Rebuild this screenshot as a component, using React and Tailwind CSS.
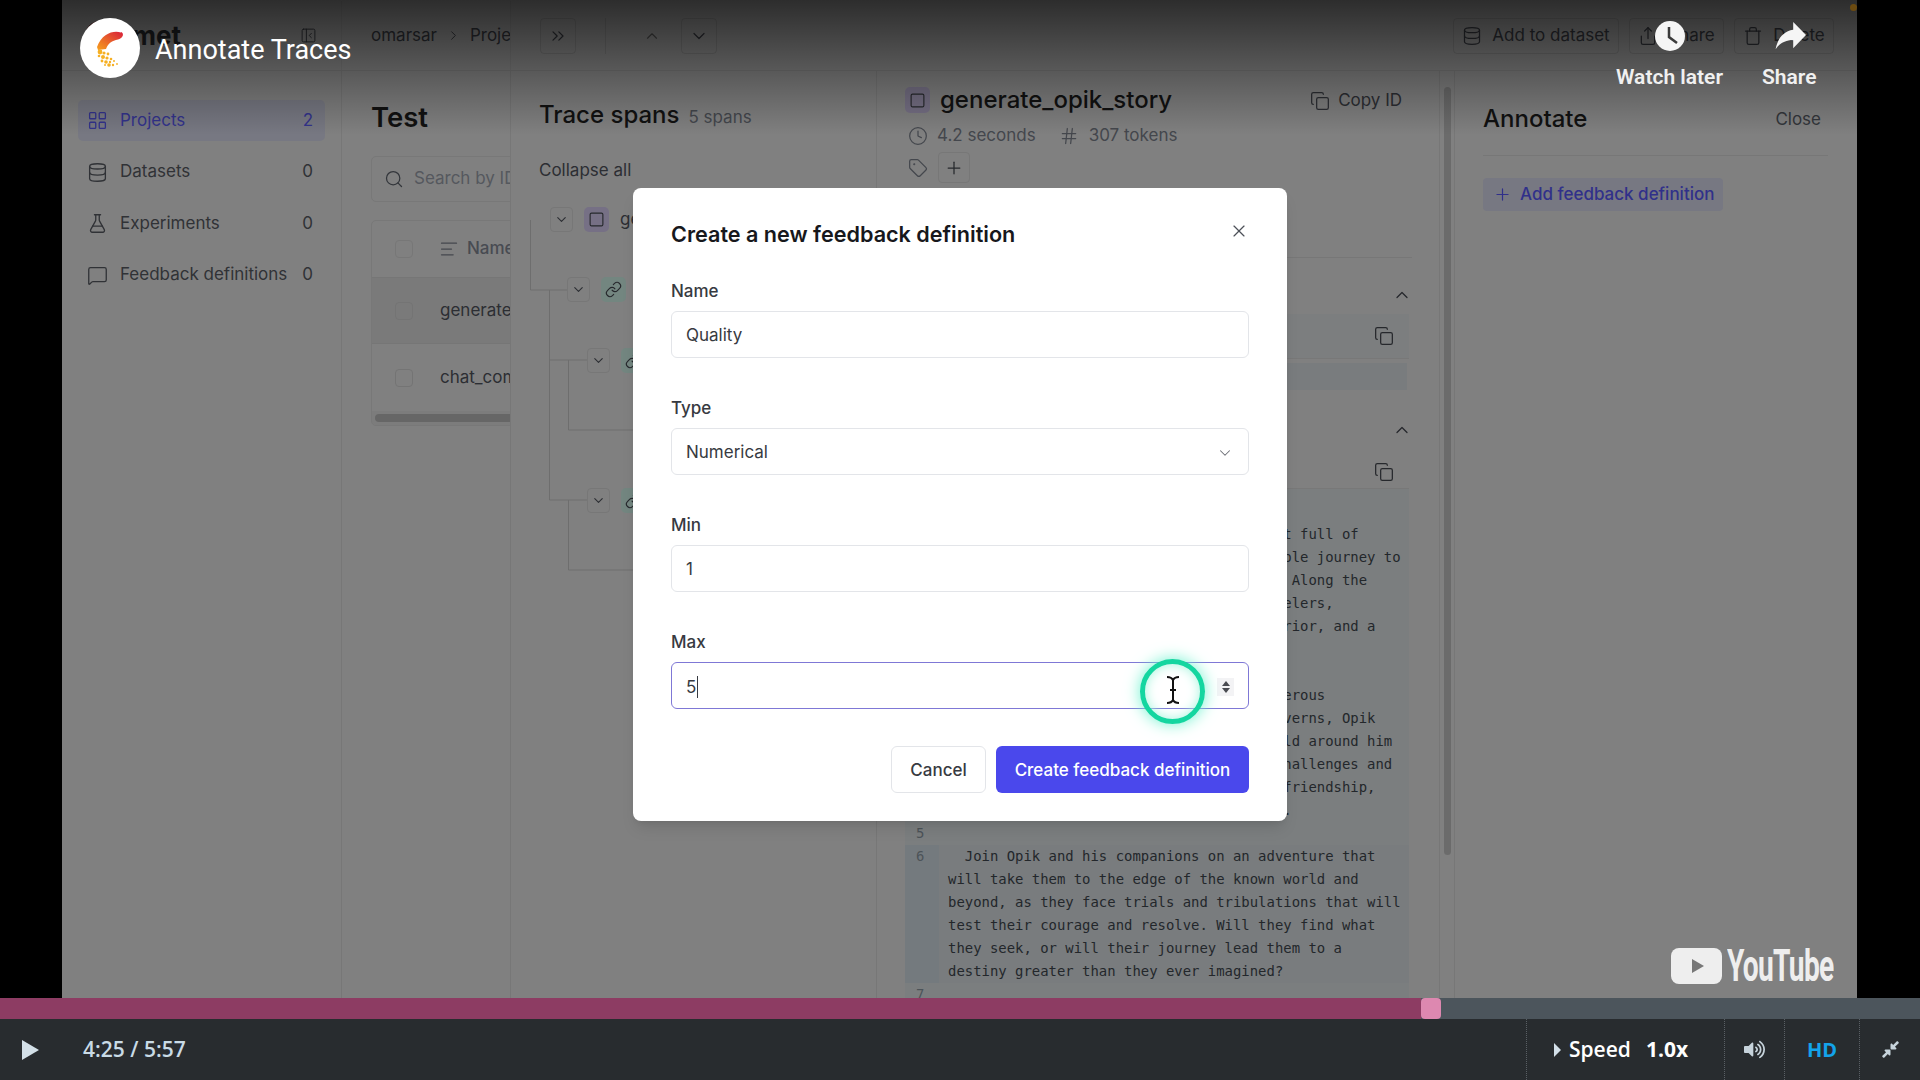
import {
  AlignLeft,
  ChevronDown,
  ChevronRight,
  ChevronUp,
  ChevronsRight,
  Clock,
  Copy,
  Database,
  FlaskConical,
  Hash,
  LayoutGrid,
  Link,
  MessageSquare,
  PanelLeftClose,
  Plus,
  Search,
  Share,
  Square,
  Tag,
  Trash,
  X,
} from "lucide-react";
import { FaCompressAlt, FaVolumeUp } from "react-icons/fa";

const navItems = [
  { name: "Projects", count: 2, Icon: LayoutGrid, active: true },
  { name: "Datasets", count: 0, Icon: Database },
  { name: "Experiments", count: 0, Icon: FlaskConical },
  { name: "Feedback definitions", count: 0, Icon: MessageSquare },
];

const codeLines = [
  { n: 1, rows: ["  The Tale of Opik"] },
  {
    n: 2,
    rows: [
      "  In a land far away, there lies a forest full of",
      "wonder. Young Opik sets out on a remarkable journey to",
      "uncover the secret of his ancient world. Along the",
      "way, he meets a band of kind fellow travelers,",
      "including a cunning wizard, a fierce warrior, and a",
      "mischievous sprite.",
    ],
  },
  { n: 3, rows: [" "] },
  {
    n: 4,
    rows: [
      "  Through enchanted mountains and treacherous",
      "crossings, and deep, dark underground caverns, Opik",
      "discovers the magic and charm of the world around him",
      "and gains valuable lessons as he faces challenges and",
      "overcomes hurdles with bravery, wit and friendship,",
      "always staying true to his ancient quest.",
    ],
  },
  { n: 5, rows: [" "] },
  {
    n: 6,
    active: true,
    rows: [
      "  Join Opik and his companions on an adventure that",
      "will take them to the edge of the known world and",
      "beyond, as they face trials and tribulations that will",
      "test their courage and resolve. Will they find what",
      "they seek, or will their journey lead them to a",
      "destiny greater than they ever imagined?",
    ],
  },
  { n: 7, rows: [" "] },
];

const treeRows = [
  { top: "mt-[25px]", left: "ml-[11px]", tile: "bg-[#767085]", Icon: Square, label: "generate_opik_story" },
  { top: "mt-[45px]", left: "ml-[28px]", tile: "bg-[#738680]", Icon: Link },
  { top: "mt-[46px]", left: "ml-[48px]", tile: "bg-[#738680]", Icon: Link },
  { top: "mt-[115px]", left: "ml-[48px]", tile: "bg-[#738680]", Icon: Link },
];

const CometMark = () => (
  <svg width="60" height="60" viewBox="0 0 60 60">
    <defs>
      <linearGradient id="comet" x1="1" y1="0" x2="0" y2="1">
        <stop offset="0" stopColor="#d81e3a" />
        <stop offset="1" stopColor="#f7a01c" />
      </linearGradient>
    </defs>
    <path d="M41 14.500C34 12 22 15 17 29l1 3 8-1c2-6 6-8 12-9.500 6-2 6-6.500 3-7.500z" fill="url(#comet)" />
    {[
      [20, 34, 2.4], [24, 35, 1.6], [28, 36, 1.4], [19, 38, 1.3], [23, 39, 2], [27, 40, 1.6], [31, 41, 1.3],
      [22, 43, 1.4], [26, 44, 1.8], [30, 44, 1.2], [34, 43, 1], [29, 47, 1.8], [33, 47, 1.2], [37, 46, 0.9],
      [25, 47, 1],
    ].map(([cx, cy, r]) => (
      <circle key={`${cx}-${cy}`} cx={cx} cy={cy} r={r} fill="#f6b024" />
    ))}
  </svg>
);

const Sidebar = () => (
  <aside className="w-[280px] shrink-0 border-r border-[#777777] px-4 pt-[29px]">
    <nav className="flex flex-col gap-[10.5px]">
      {navItems.map(({ name, count, Icon, active }) => (
        <div
          key={name}
          className={`flex h-[41px] items-center rounded-[5px] pl-[9px] pr-[12px] text-[17px] ${
            active ? "bg-[#777882] text-[#33338c]" : "text-[#303236]"
          }`}
        >
          <Icon size={21} strokeWidth={1.5} className="mr-[12px] shrink-0" />
          <span className="flex-1">{name}</span>
          <span>{count}</span>
        </div>
      ))}
    </nav>
  </aside>
);

const TestPanel = () => (
  <section className="w-[169px] shrink-0 overflow-hidden border-r border-[#777777] pl-[29px] pt-[30px]">
    <h1 className="h-[32px] text-[27.5px] leading-[32px] font-semibold text-[#111111]">Test</h1>
    <div className="mt-[23px] flex h-[46px] w-[300px] items-center gap-[10px] rounded-[5px] border border-[#787878] pl-[12px] text-[17px] whitespace-nowrap text-[#55585e]">
      <Search size={20} strokeWidth={1.5} className="text-[#33363b]" />
      Search by ID
    </div>
    <div className="mt-[18px] w-[300px] overflow-hidden rounded-[5px] border border-[#787878] text-[17px] text-[#2c2e33]">
      <div className="flex h-[57px] items-center border-b border-[#767676] pl-[23px]">
        <span className="mr-[26px] h-[18px] w-[18px] rounded-[4px] border border-[#777777]" />
        <AlignLeft size={20} strokeWidth={1.5} className="mr-[8px] text-[#44474d]" />
        <span className="font-medium text-[#484b52]">Name</span>
      </div>
      <div className="flex h-[66px] items-center border-b border-[#767676] bg-[#7a7a7a] pl-[23px]">
        <span className="mr-[27px] h-[18px] w-[18px] rounded-[4px] border border-[#747474]" />
        generate_opik_story
      </div>
      <div className="flex h-[67px] items-center pl-[23px]">
        <span className="mr-[27px] h-[18px] w-[18px] rounded-[4px] border border-[#747474]" />
        chat_completion
      </div>
      <div className="flex h-[14px] items-center bg-[#7c7c7c] pl-[3px]">
        <div className="h-[8px] w-[260px] rounded-full bg-[#666666]" />
      </div>
    </div>
  </section>
);

const TracePanel = () => (
  <section className="relative w-[366px] shrink-0 border-r border-[#777777] pl-[28px] pt-[28px]">
    <div className="flex h-[32px] items-baseline gap-[9px] whitespace-nowrap">
      <h2 className="text-[24px] leading-[32px] font-medium text-[#111111]">Trace spans</h2>
      <span className="text-[17px] text-[#44474d]">5 spans</span>
    </div>
    <button className="mt-[27px] block h-[24px] text-[17px] leading-[24px] text-[#2c2e33]">Collapse all</button>
    <svg className="absolute left-0 top-0" width="366" height="520" fill="none" stroke="#6e6e6e">
      <path d="M19.500 149V219H56M38.500 219V289H76M57.500 289V359H122M38.500 289V429H76M57.500 429V499H122" />
    </svg>
    {treeRows.map(({ top, left, tile, Icon, label }, i) => (
      <div key={i} className={`relative flex h-[25px] items-center gap-[11px] ${top} ${left}`}>
        <span className="flex h-[25px] w-[23px] items-center justify-center rounded-[4px] border border-[#777777] bg-[#808080]">
          <ChevronDown size={15} strokeWidth={1.8} className="text-[#2c2e33]" />
        </span>
        <span className={`flex h-[25px] w-[25px] items-center justify-center rounded-[5px] ${tile}`}>
          <Icon size={17} strokeWidth={1.6} className="text-[#26282c]" />
        </span>
        {label && <span className="text-[17px] whitespace-nowrap text-[#2c2e33]">{label}</span>}
      </div>
    ))}
  </section>
);

const CodeBlock = () => (
  <div className="mr-[3px] flex-1 overflow-hidden bg-[#7b7e7f] pt-[11px] font-['DejaVu_Sans_Mono',monospace] text-[13.93px] leading-[23px] text-[#23272b]">
    {codeLines.map(({ n, rows, active }) => (
      <div key={n} className={`flex ${active ? "bg-[#797c7e]" : ""}`}>
        <div className={`w-[34px] shrink-0 pl-[11px] text-[#4c5358] ${active ? "bg-[#747a7e]" : ""}`}>{n}</div>
        <div className="pl-[9px] whitespace-pre">
          {rows.map((row, i) => (
            <div key={i}>{row}</div>
          ))}
        </div>
      </div>
    ))}
  </div>
);

const DetailPanel = () => (
  <section className="flex w-[578px] shrink-0 border-r border-[#777777]">
    <div className="flex w-[563px] shrink-0 flex-col border-r border-[#777777] pl-[28px] pr-[27px] pt-[16px]">
      <div className="flex h-[26px] items-center">
        <span className="mr-[10px] flex h-[26px] w-[25px] items-center justify-center rounded-[5px] bg-[#767085]">
          <Square size={17} strokeWidth={1.6} className="text-[#26282c]" />
        </span>
        <h2 className="flex-1 text-[24px] font-medium text-[#111111]">generate_opik_story</h2>
        <Copy size={20} strokeWidth={1.5} className="mr-[8px] mt-[2px] text-[#2c2e33]" />
        <span className="mr-[10px] mt-[2px] text-[17px] text-[#2c2e33]">Copy ID</span>
      </div>
      <div className="mt-[11px] flex h-[24px] items-center pl-[3px] text-[17px] text-[#44474d]">
        <Clock size={20} strokeWidth={1.5} className="mr-[9px]" />
        <span>4.2 seconds</span>
        <Hash size={20} strokeWidth={1.5} className="ml-[23px] mr-[10px]" />
        <span>307 tokens</span>
      </div>
      <div className="mt-[4px] flex h-[31px] items-center pl-[3px]">
        <Tag size={20} strokeWidth={1.5} className="mr-[10px] text-[#44474d]" />
        <span className="flex h-[31px] w-[32px] items-center justify-center rounded-[4px] border border-[#777777]">
          <Plus size={20} strokeWidth={1.5} className="text-[#26282c]" />
        </span>
      </div>
      <div className="mt-[39px] flex h-[36px] justify-start border-b border-[#777777] pl-[303px] text-[17px] leading-[24px] text-[#2c2e33]">
        Metadata
      </div>
      <div className="mt-[25px] flex h-[24px] items-center justify-end">
        <ChevronUp size={20} strokeWidth={1.5} className="text-[#26282c]" />
      </div>
      <div className="mr-[3px] mt-[7px] flex h-[45px] items-center justify-end border-b border-[#787878] bg-[#7c7e7f] pr-[15px]">
        <Copy size={20} strokeWidth={1.5} className="text-[#26282c]" />
      </div>
      <div className="mr-[5px] mt-[4px] h-[27px] bg-[#797c7e]" />
      <div className="mt-[28px] flex h-[24px] items-center justify-end">
        <ChevronUp size={20} strokeWidth={1.5} className="text-[#26282c]" />
      </div>
      <div className="mr-[3px] flex h-[47px] items-end justify-end border-b border-[#787878] pb-[6px] pr-[15px]">
        <Copy size={20} strokeWidth={1.5} className="text-[#26282c]" />
      </div>
      <CodeBlock />
    </div>
    <div className="flex-1 pl-[4px] pt-[16px]">
      <div className="h-[768px] w-[7px] rounded-full bg-[#6b6b6b]" />
    </div>
  </section>
);

const AnnotatePanel = () => (
  <section className="flex-1 pl-[28px] pr-[29px] pt-[32px]">
    <div className="flex h-[53px] items-start justify-between border-b border-[#777777]">
      <h2 className="text-[24px] leading-[32px] font-medium text-[#111111]">Annotate</h2>
      <span className="pr-[7px] text-[17px] leading-[32px] text-[#33363b]">Close</span>
    </div>
    <button className="mt-[22px] flex h-[33px] w-[240px] items-center rounded-[4px] bg-[#777882] pl-[10px] text-[17px] font-medium text-[#30308a]">
      <Plus size={19} strokeWidth={1.5} className="mr-[8px]" />
      Add feedback definition
    </button>
  </section>
);

const AppHeader = () => (
  <header className="flex h-[71px] shrink-0 items-center border-b border-[#777777] pt-[1px] text-[17px] text-[#2c2e33]">
    <div className="flex h-full w-[280px] shrink-0 items-center border-r border-black/5">
      <span className="ml-[23px] mr-[-18px] h-[30px] w-[30px] rounded-full bg-[#4b0a0a]" />
      <span className="w-[203px] text-[26px] font-bold text-[#1c1d20]">Comet</span>
      <PanelLeftClose size={17} strokeWidth={1.4} />
    </div>
    <div className="flex h-full w-[169px] shrink-0 items-center overflow-hidden border-r border-black/5 pl-[29px] whitespace-nowrap">
      omarsar
      <ChevronRight size={15} strokeWidth={1.5} className="mx-[9px] shrink-0" />
      Projects
    </div>
    <span className="ml-[29px] flex h-[36px] w-[36px] items-center justify-center rounded-[4px] border border-black/10">
      <ChevronsRight size={20} strokeWidth={1.5} />
    </span>
    <span className="ml-[29px] h-[36px] w-px bg-black/10" />
    <ChevronUp size={18} strokeWidth={1.5} className="ml-[37px] text-[#444444]" />
    <span className="ml-[20px] flex h-[36px] w-[36px] items-center justify-center rounded-[4px] border border-black/10">
      <ChevronDown size={20} strokeWidth={1.5} />
    </span>
    <div className="ml-auto mr-[23px] flex gap-[10px]">
      <span className="flex h-[36px] w-[166px] items-center justify-center gap-[10px] rounded-[4px] border border-black/10">
        <Database size={20} strokeWidth={1.5} />
        Add to dataset
      </span>
      <span className="flex h-[36px] w-[95px] items-center justify-center gap-[10px] rounded-[4px] border border-black/10">
        <Share size={20} strokeWidth={1.5} />
        Share
      </span>
      <span className="flex h-[36px] w-[100px] items-center justify-center gap-[10px] rounded-[4px] border border-black/10">
        <Trash size={20} strokeWidth={1.5} />
        Delete
      </span>
    </div>
  </header>
);

const Field = ({ label, children, focused }) => (
  <div className="mb-[37px]">
    <label className="block h-[25px] pt-[1px] text-[17px] leading-[25px] font-medium text-[#373a41]">{label}</label>
    <div
      className={`mt-[8px] flex h-[47px] items-center justify-between rounded-[6px] border pl-[14px] pr-[14px] pt-[2px] text-[17px] text-[#373a41] ${
        focused ? "border-[#7f78d6]" : "border-[#e3e5e9]"
      }`}
    >
      {children}
    </div>
  </div>
);

const FeedbackModal = () => (
  <div className="absolute left-[633px] top-[188px] h-[633px] w-[654px] rounded-[8px] bg-white px-[38px] pt-[33px] shadow-lg">
    <h2 className="h-[27px] text-[21.6px] leading-[27px] font-semibold text-[#17181c]">
      Create a new feedback definition
    </h2>
    <X size={20} strokeWidth={1.4} className="absolute right-[38px] top-[33px] text-[#4d5058]" />
    <div className="mt-[30px]">
      <Field label="Name">Quality</Field>
      <Field label="Type">
        Numerical
        <ChevronDown size={18} strokeWidth={1.4} className="text-[#6b6e75]" />
      </Field>
      <Field label="Min">1</Field>
      <Field label="Max" focused>
        <span className="border-r border-[#373a41] pr-px leading-[22px]">5</span>
        <span className="flex h-[18px] w-[17px] flex-col items-center justify-center gap-[2px] bg-[#f3f3f5]">
          <span className="h-0 w-0 border-x-[4px] border-b-[5px] border-x-transparent border-b-[#4a4c52]" />
          <span className="h-0 w-0 border-x-[4px] border-t-[5px] border-x-transparent border-t-[#4a4c52]" />
        </span>
      </Field>
    </div>
    <div className="mt-[1px] flex justify-end gap-[10px] text-[17px] font-medium">
      <button className="h-[47px] w-[95px] rounded-[6px] border border-[#e3e5e9] pt-[2px] text-[#373a41]">Cancel</button>
      <button className="h-[47px] w-[253px] rounded-[6px] bg-[#4a48ec] pt-[2px] text-white">Create feedback definition</button>
    </div>
  </div>
);

const CursorHighlight = () => (
  <div className="absolute left-[1140px] top-[659px] flex h-[65px] w-[65px] items-center justify-center rounded-full border-[5px] border-[#14d6a0] pb-[4px] shadow-[0_0_16px_#6ff2cf,inset_0_0_12px_#a5f5dd]">
    <svg width="16" height="30" viewBox="0 0 16 30" fill="none" stroke="#111111" strokeWidth="2">
      <path d="M2 2c3 0 5 1 6 3 1-2 3-3 6-3M8 5v20M2 28c3 0 5-1 6-3 1 2 3 3 6 3M5 15h6" />
    </svg>
  </div>
);

const PlayerOverlay = () => (
  <>
    <div className="absolute left-[62px] top-0 h-[135px] w-[1795px] bg-linear-to-b from-black/65 to-transparent" />
    <div className="absolute left-[80px] top-[18px] flex items-center gap-[15px]">
      <div className="h-[60px] w-[60px] rounded-full bg-white">
        <CometMark />
      </div>
      <span className="mt-[4px] font-['Roboto',sans-serif] text-[27px] text-white">Annotate Traces</span>
    </div>
    <div className="absolute left-[1655px] top-[21px]">
      <svg width="30" height="30" viewBox="0 0 30 30">
        <circle cx="15" cy="15" r="15" fill="#f5f5f5" />
        <path d="M14 6v10l8 6" fill="none" stroke="#3b3b3b" strokeWidth="2.500" />
      </svg>
    </div>
    <div className="absolute left-[1774px] top-[21px]">
      <svg width="32" height="30" viewBox="2 4 20 17" preserveAspectRatio="none">
        <path d="M14 9V4.500l8 7.500-8 7.500v-4.600c-5 0-8.500 1.600-11 5.100 1-5 4-10 11-11z" fill="#f5f5f5" />
      </svg>
    </div>
    <span className="absolute left-[1616px] top-[62px] font-['Roboto',sans-serif] text-[21px] font-semibold text-[#f0f0f0]">
      Watch later
    </span>
    <span className="absolute left-[1762px] top-[62px] font-['Roboto',sans-serif] text-[21px] font-semibold text-[#f0f0f0]">
      Share
    </span>
    <span className="absolute left-[1850px] top-[4px] h-[7px] w-[7px] rounded-full bg-[#6b4a10]" />
    <div className="absolute left-[1671px] top-[948px] flex h-[36px] w-[51px] items-center justify-center rounded-[8px] bg-[#eeeeee]">
      <span className="ml-[2px] h-0 w-0 border-y-[7px] border-l-[12px] border-y-transparent border-l-[#777777]" />
    </div>
    <span className="absolute left-[1727px] top-[944px] origin-left scale-x-[0.64] font-['Roboto',sans-serif] text-[44px] leading-[44px] font-bold tracking-tight text-[#eeeeee]">
      YouTube
    </span>
  </>
);

const PlayerControls = () => (
  <>
    <div className="flex h-[21px] shrink-0 bg-[#4c555c]">
      <div className="h-full w-[1421px] bg-[#8d3c63]" />
      <div className="h-full w-[20px] rounded-[4px] bg-[#dd88b0]" />
    </div>
    <div className="flex h-[61px] shrink-0 items-center bg-[#282c2f] font-['Open_Sans',sans-serif] text-white">
      <span className="ml-[22px] h-0 w-0 border-y-[10px] border-l-[17px] border-y-transparent border-l-[#d3e0e8]" />
      <span className="ml-[44px] w-[1443px] text-[21px] font-semibold text-[#c9dbe6]">4:25 / 5:57</span>
      <div className="flex h-full w-[198px] items-center border-l border-dotted border-[#5a6065] pl-[27px]">
        <span className="h-0 w-0 border-y-[7px] border-l-[7px] border-y-transparent border-l-[#d3e0e8]" />
        <span className="ml-[8px] text-[21px] font-semibold">Speed</span>
        <span className="ml-[15px] text-[21px] font-bold">1.0x</span>
      </div>
      <div className="flex h-full w-[60px] items-center justify-center border-l border-dotted border-[#5a6065]">
        <FaVolumeUp size={21} className="text-[#c6d3db]" />
      </div>
      <div className="flex h-full w-[75px] items-center justify-center border-l border-dotted border-[#5a6065] text-[20px] font-bold text-[#13a3ea]">
        HD
      </div>
      <div className="flex h-full flex-1 items-center justify-center border-l border-dotted border-[#5a6065]">
        <FaCompressAlt size={19} className="text-[#c6d3db]" />
      </div>
    </div>
  </>
);

export default function App() {
  return (
    <div className="relative flex h-[1080px] w-[1920px] flex-col overflow-hidden bg-black font-['Inter',sans-serif]">
      <div className="ml-[62px] mr-[63px] flex min-h-0 flex-1 flex-col overflow-hidden bg-[#808080]">
        <AppHeader />
        <div className="flex min-h-0 flex-1">
          <Sidebar />
          <TestPanel />
          <TracePanel />
          <DetailPanel />
          <AnnotatePanel />
        </div>
      </div>
      <PlayerControls />
      <PlayerOverlay />
      <FeedbackModal />
      <CursorHighlight />
    </div>
  );
}
